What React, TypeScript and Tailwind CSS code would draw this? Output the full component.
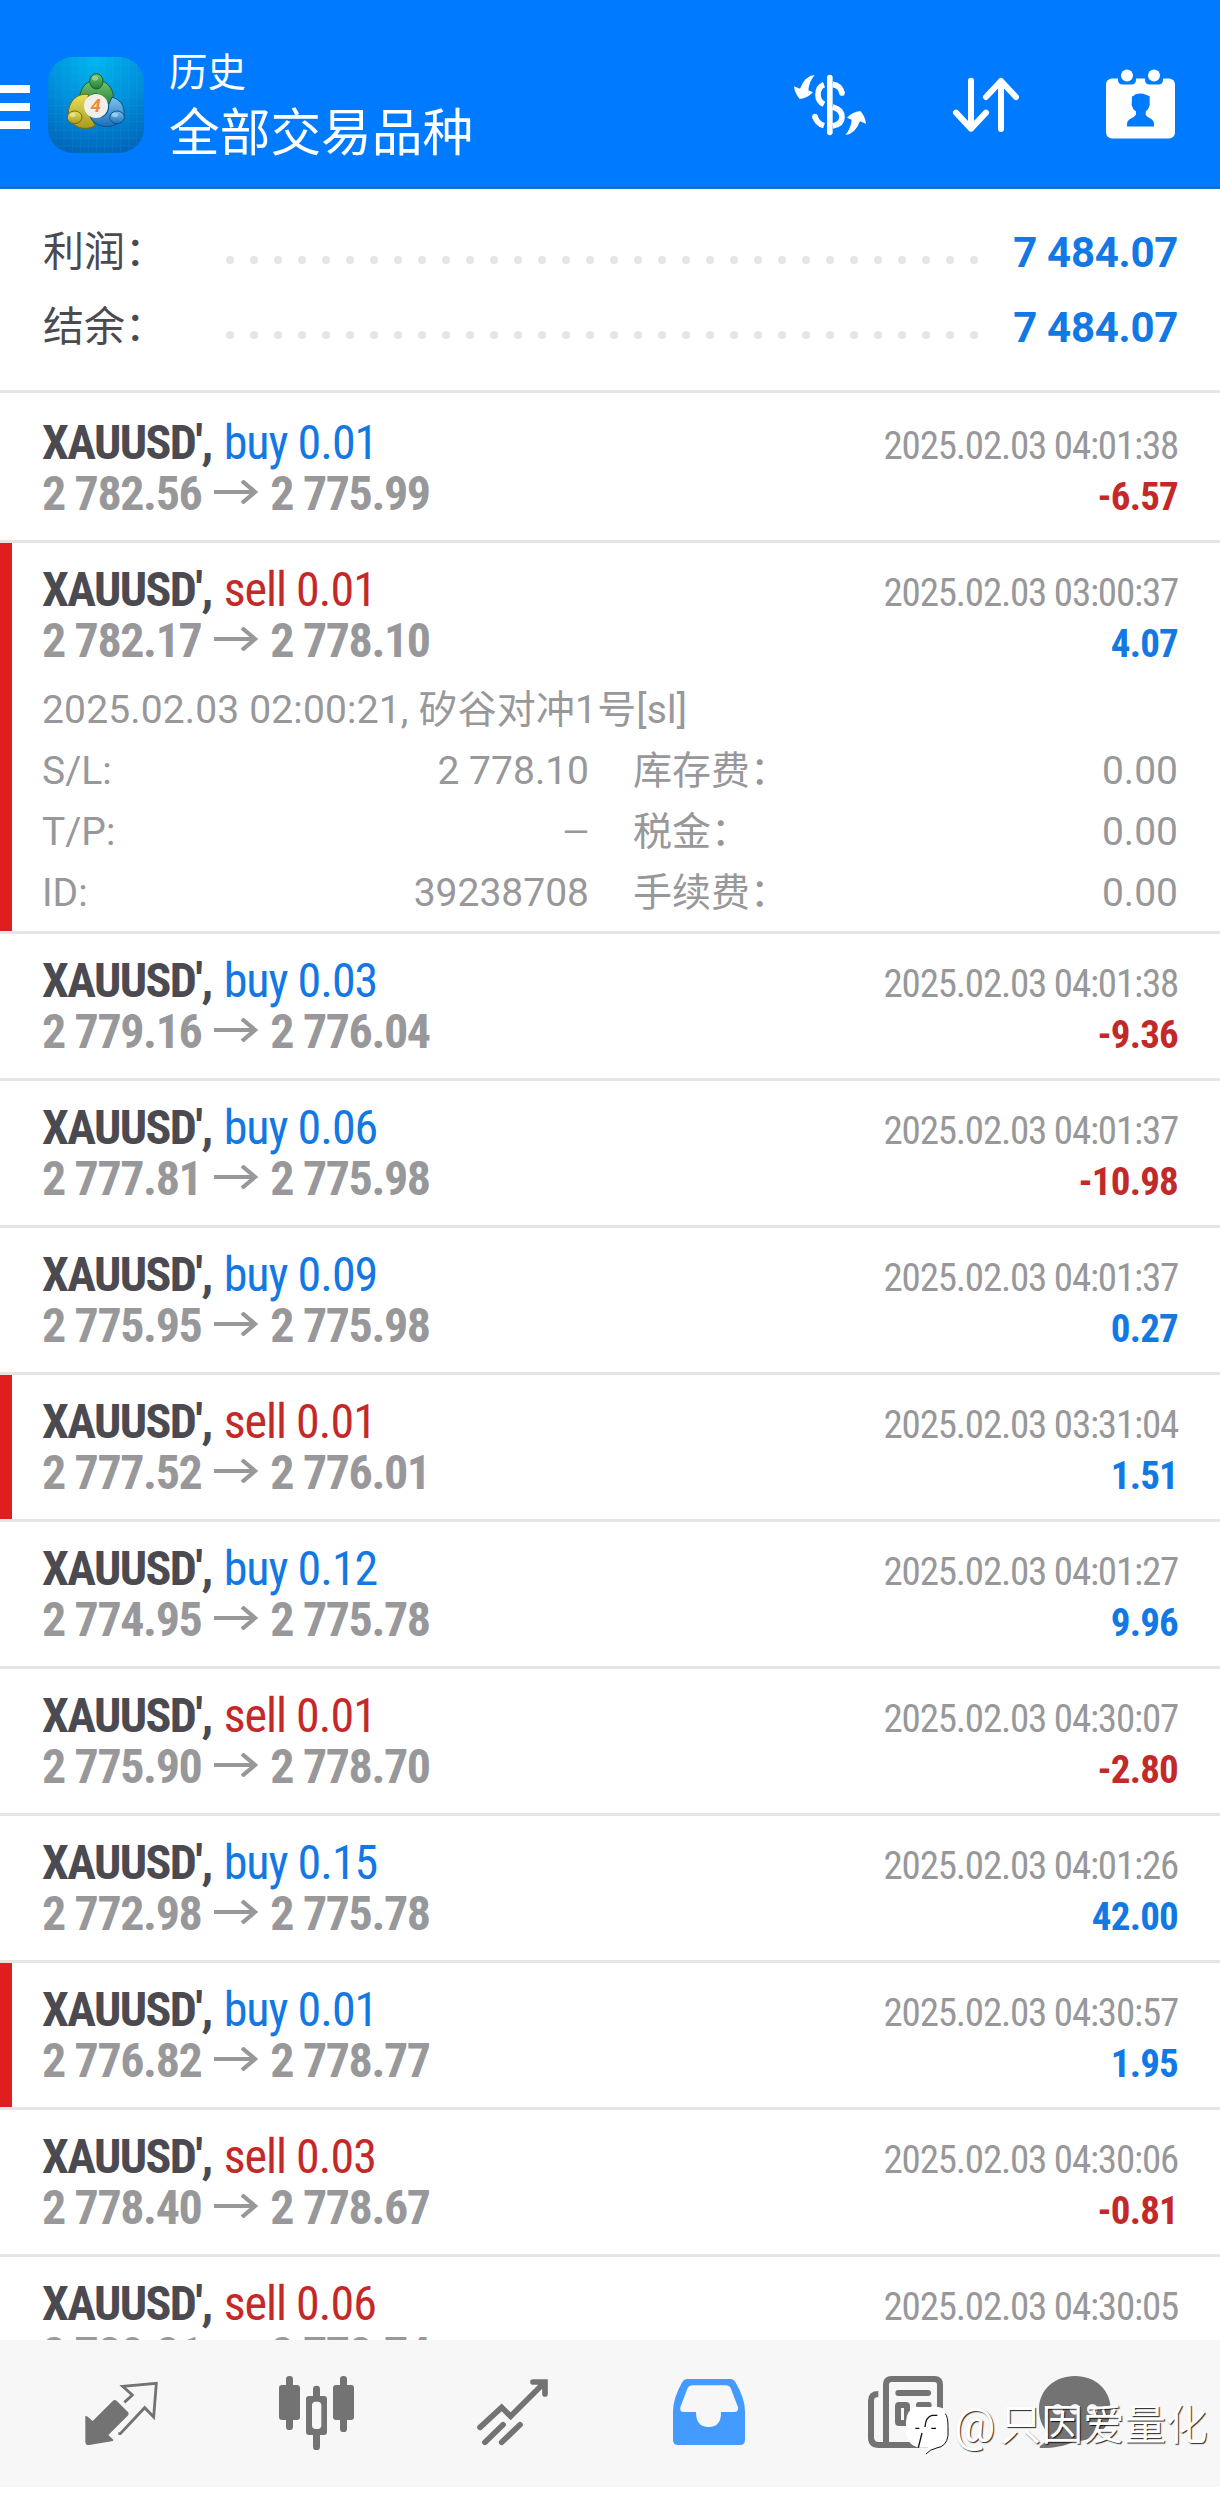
type Deal = {
  side: "buy" | "sell";
  volume: string;
  open: string;
  close: string;
  time: string;
  profit: string;
  marked?: boolean;
  expanded?: boolean;
};

const deals: Deal[] = [
  { side: "buy", volume: "0.01", open: "2 782.56", close: "2 775.99", time: "2025.02.03 04:01:38", profit: "-6.57" },
  { side: "sell", volume: "0.01", open: "2 782.17", close: "2 778.10", time: "2025.02.03 03:00:37", profit: "4.07", marked: true, expanded: true },
  { side: "buy", volume: "0.03", open: "2 779.16", close: "2 776.04", time: "2025.02.03 04:01:38", profit: "-9.36" },
  { side: "buy", volume: "0.06", open: "2 777.81", close: "2 775.98", time: "2025.02.03 04:01:37", profit: "-10.98" },
  { side: "buy", volume: "0.09", open: "2 775.95", close: "2 775.98", time: "2025.02.03 04:01:37", profit: "0.27" },
  { side: "sell", volume: "0.01", open: "2 777.52", close: "2 776.01", time: "2025.02.03 03:31:04", profit: "1.51", marked: true },
  { side: "buy", volume: "0.12", open: "2 774.95", close: "2 775.78", time: "2025.02.03 04:01:27", profit: "9.96" },
  { side: "sell", volume: "0.01", open: "2 775.90", close: "2 778.70", time: "2025.02.03 04:30:07", profit: "-2.80" },
  { side: "buy", volume: "0.15", open: "2 772.98", close: "2 775.78", time: "2025.02.03 04:01:26", profit: "42.00" },
  { side: "buy", volume: "0.01", open: "2 776.82", close: "2 778.77", time: "2025.02.03 04:30:57", profit: "1.95", marked: true },
  { side: "sell", volume: "0.03", open: "2 778.40", close: "2 778.67", time: "2025.02.03 04:30:06", profit: "-0.81" },
  { side: "sell", volume: "0.06", open: "2 780.21", close: "2 778.74", time: "2025.02.03 04:30:05", profit: "" },
];

const details = [
  ["S/L:", "2 778.10", "库存费：", "0.00"],
  ["T/P:", "—", "税金：", "0.00"],
  ["ID:", "39238708", "手续费：", "0.00"],
];

function AppLogo() {
  return (
    <svg className="ml-[18px] size-24 shrink-0 rounded-[25px]" viewBox="24 21 288 288">
      <defs>
        <radialGradient id="sky" cx="50%" cy="0%" r="105%">
          <stop offset="0" stopColor="#00b8ee" />
          <stop offset=".5" stopColor="#008fdc" />
          <stop offset="1" stopColor="#0063b8" />
        </radialGradient>
        <linearGradient id="green" x1="0" y1="0" x2="0" y2="1">
          <stop offset="0" stopColor="#7cc46e" />
          <stop offset="1" stopColor="#1f7f36" />
        </linearGradient>
        <linearGradient id="yellow" x1="0" y1="0" x2="0" y2="1">
          <stop offset="0" stopColor="#e9e05c" />
          <stop offset="1" stopColor="#a89a1d" />
        </linearGradient>
        <linearGradient id="blue" x1="0" y1="0" x2="0" y2="1">
          <stop offset="0" stopColor="#7cc3ee" />
          <stop offset="1" stopColor="#1b6fb8" />
        </linearGradient>
      </defs>
      <rect x="24" y="21" width="288" height="288" fill="url(#sky)" />
      <path
        d="M48 21V309M72 21V309M97 21V309M121 21V309M145 21V309M170 21V309M194 21V309M218 21V309M242 21V309M266 21V309M290 21V309M24 45H312M24 70H312M24 94H312M24 118H312M24 142H312M24 167H312M24 191H312M24 215H312M24 240H312M24 264H312M24 288H312"
        stroke="#5cc3f5"
        strokeOpacity=".14"
        strokeWidth="2"
      />
      <g strokeWidth="3">
        <path d="M121 162C112 118 140 90 170 90S232 120 216 170L190 150Q170 118 148 140Z" fill="url(#green)" stroke="#17602c" />
        <path d="M146 134C108 126 80 162 86 200C96 232 136 246 166 226L146 192Q150 186 134 172Z" fill="url(#yellow)" stroke="#766a10" />
        <path d="M216 142C252 150 262 190 242 214C210 242 162 230 150 198L188 200Q208 190 206 164Z" fill="url(#blue)" stroke="#0e4e8b" />
        <ellipse cx="169" cy="94" rx="20" ry="23" fill="url(#green)" stroke="#17602c" />
        <ellipse cx="104" cy="202" rx="22" ry="19" fill="url(#yellow)" stroke="#766a10" />
        <ellipse cx="231" cy="202" rx="22" ry="19" fill="url(#blue)" stroke="#0e4e8b" />
      </g>
      <ellipse cx="165" cy="85" rx="9" ry="7" fill="#fff" opacity=".35" />
      <ellipse cx="98" cy="195" rx="9" ry="6" fill="#fff" opacity=".4" />
      <ellipse cx="225" cy="195" rx="9" ry="6" fill="#fff" opacity=".4" />
      <circle cx="168" cy="168" r="36" fill="#f1efec" />
      <text x="167" y="187" textAnchor="middle" className="fill-[#ef8a35] font-[Roboto] text-[56px] font-bold italic">
        4
      </text>
    </svg>
  );
}

function CurrencyIcon() {
  return (
    <svg className="h-[66px] w-[76px]" viewBox="96 96 228 198" fill="none" stroke="#fff" strokeWidth="17">
      <path d="M209.500 113V277" strokeLinecap="round" />
      <path d="M192 134Q174 141 174 164Q174 184 192 193M218 133Q242 137 246 159M218 201Q246 208 246 232Q246 253 218 258M165 229Q170 250 192 257" />
      <circle cx="246" cy="159" r="8.500" fill="#fff" stroke="none" />
      <circle cx="165" cy="230" r="8.500" fill="#fff" stroke="none" />
      <g fill="#fff" stroke="none">
        <path id="curl" d="M164 105Q136 106 120 146L102 139Q104 160 119 177Q142 175 159 157L145 151Q147 125 164 105Z" />
        <use href="#curl" transform="rotate(180 210 195)" />
      </g>
    </svg>
  );
}

function SortIcon() {
  return (
    <svg className="h-[60px] w-[70px]" viewBox="573 105 210 180" fill="none" stroke="#fff" strokeWidth="18" strokeLinecap="round" strokeLinejoin="round">
      <path d="M633 122V266M588 218L633 266L678 218M723 267V123M678 171L723 123L768 171" />
    </svg>
  );
}

function CalendarIcon() {
  return (
    <svg className="size-[73px]" viewBox="1032 85.5 219 219" fill="#fff">
      <rect x="1038" y="114" width="207" height="180" rx="18" />
      <path d="M1074 105H1128V118Q1128 132 1114 132H1088Q1074 132 1074 118ZM1155 105H1209V118Q1209 132 1195 132H1169Q1155 132 1155 118Z" fill="#007aff" />
      <circle cx="1101" cy="105" r="18" />
      <circle cx="1182" cy="105" r="18" />
      <path
        d="M1116 168Q1122 166 1125 162Q1142 155 1158 163L1169 167V194Q1167 204 1157 213V223Q1162 232 1175 236Q1182 241 1182 249V258H1101V249Q1101 241 1109 236Q1122 232 1128 222V213Q1117 204 1115 194Z"
        fill="#007aff"
      />
    </svg>
  );
}

function PriceArrow() {
  return (
    <svg className="mr-3 ml-[13px] h-6 w-11" viewBox="0 0 44 24" fill="none" stroke="#98989b" strokeWidth="4.2">
      <path d="M0 12H41M28 1L41 12L28 23" />
    </svg>
  );
}

function SummaryRow({ label, value }: { label: string; value: string }) {
  return (
    <div className="flex h-[75px] items-center leading-[75px]">
      <span className="w-[183px] text-[41px] text-[#4b4a50]">{label}</span>
      <span className="mt-[15px] flex w-[752px] justify-between">
        {Array.from({ length: 32 }, (_, i) => (
          <i key={i} className="size-2 rounded-full bg-[#e5e5e5]" />
        ))}
      </span>
      <span className="ml-auto text-[42px] font-bold tracking-[-0.3px] text-[#1278e4]">{value}</span>
    </div>
  );
}

function DealRow({ deal }: { deal: Deal }) {
  return (
    <div className={`border-b-3 border-[#e5e5e5] ${deal.marked ? "bg-linear-to-r from-[#e01e1e] from-[12px] to-white to-[12px]" : ""}`}>
      <div className={`pr-[42px] pl-[42px] pt-[21px] ${deal.expanded ? "pb-[7px]" : "pb-[21px]"}`}>
        <div className="flex h-[51px] items-baseline justify-between font-['Roboto_Condensed',Roboto,sans-serif] leading-[51px]">
          <span className="text-[48px]">
            <b className="tracking-[-1.6px] text-[#4b4a50]">XAUUSD',</b>
            <span className={`ml-3 tracking-[-1px] ${deal.side === "buy" ? "text-[#1278e4]" : "text-[#c4292a]"}`}>
              {deal.side} {deal.volume}
            </span>
          </span>
          <span className="text-[39px] tracking-[-1.2px] text-[#98989b]">{deal.time}</span>
        </div>
        <div className="flex h-[51px] items-baseline justify-between font-['Roboto_Condensed',Roboto,sans-serif] font-bold leading-[51px]">
          <span className="flex items-baseline text-[48px] tracking-[-1.4px] text-[#98989b]">
            {deal.open}
            <span className="self-start pt-[12px]">
              <PriceArrow />
            </span>
            {deal.close}
          </span>
          <span className={`text-[39px] tracking-[-0.8px] ${deal.profit.startsWith("-") ? "text-[#c4292a]" : "text-[#1278e4]"}`}>{deal.profit}</span>
        </div>
        {deal.expanded && (
          <div className="mt-[14px] text-[39px] leading-[61px] text-[#98989b]">
            <p className="tracking-[0.15px]">2025.02.03 02:00:21, 矽谷对冲1号[sl]</p>
            {details.map(([name, value, fee, amount]) => (
              <div key={name} className="flex h-[61px]">
                <span>{name}</span>
                <span className={`ml-auto ${value === "—" ? "text-[34px]" : ""}`}>{value}</span>
                <span className="ml-[44px] flex w-[545px] justify-between">
                  <span>{fee}</span>
                  <span>{amount}</span>
                </span>
              </div>
            ))}
          </div>
        )}
      </div>
    </div>
  );
}

function TabBar() {
  return (
    <nav className="relative mb-2 flex h-[147px] shrink-0 items-start gap-[116px] bg-[#f7f7f7] pt-[34px] pl-[82px]">
      {/* Quotes */}
      <svg className="size-20 shrink-0" viewBox="66 132 240 240" fill="#737373">
        <path d="M76 258L81 259L98 273L159 212Q164 208 170 212L203 245Q209 251 203 257L145 315L160 329L159 333L88 345Q76 346 76 335Z" />
        <path d="M193 217L217 195L188 169L289 160L281 261L254 233L181 311H175" fill="none" stroke="#737373" strokeWidth="8.500" />
      </svg>
      {/* Charts */}
      <svg className="size-20 shrink-0" viewBox="654 132 240 240" fill="#737373">
        <rect x="678" y="138" width="21" height="162" rx="10" />
        <rect x="657" y="165" width="63" height="105" rx="9" />
        <rect x="840" y="138" width="21" height="168" rx="10" />
        <rect x="819" y="165" width="63" height="105" rx="9" />
        <rect x="759" y="167" width="21" height="193" rx="10" />
        <rect x="738" y="198" width="63" height="117" rx="9" />
        <rect x="756" y="215" width="28" height="82" rx="11" fill="#f7f7f7" />
      </svg>
      {/* Trade */}
      <svg className="size-20 shrink-0" viewBox="1242 132 240 240" fill="none" stroke="#737373" strokeWidth="17" strokeLinecap="round">
        <path d="M1260 292L1325 232L1352 259L1452 159M1419 156H1455V192" />
        <path d="M1275 337L1329 284M1325 337L1380 284" />
      </svg>
      {/* History */}
      <svg className="size-20 shrink-0" viewBox="60 132 240 240" fill="#439bff" fillRule="evenodd">
        <path d="M111 147H241Q251 147 256 156Q285 205 285 245V330Q285 345 270 345H84Q69 345 69 330V245Q69 205 97 156Q102 147 111 147ZM126 166Q117 166 113 174L91 232Q88 246 101 246H138Q138 291 176 291T213 246H253Q266 246 264 232L242 174Q238 166 229 166Z" />
      </svg>
      {/* News */}
      <svg className="size-20 shrink-0" viewBox="648 132 240 240" fill="none" stroke="#737373" strokeWidth="18">
        <path d="M685 192Q663 192 663 212V322Q663 345 686 345H860Q870 345 870 334V164Q870 147 853 147H725Q708 147 708 164V345" />
        <path d="M745 189H834M807 225H836M807 279H836" strokeLinecap="round" />
        <rect x="744" y="225" width="27" height="54" rx="3" />
      </svg>
      {/* Messages */}
      <svg className="-ml-[26px] size-20 shrink-0" viewBox="528 132 240 240" fill="#737373">
        <path d="M645 138C707 138 752 180 752 238C752 300 700 334 645 334C610 352 570 355 540 354Q536 350 545 345Q560 336 565 310C548 292 537 270 537 238C537 180 583 138 645 138Z" />
        <g fill="#f7f7f7">
          <circle cx="593" cy="238" r="16" />
          <circle cx="645" cy="238" r="16" />
          <circle cx="697" cy="238" r="16" />
        </g>
      </svg>

      {/* Author mark over the last tabs */}
      <div className="absolute top-[56px] left-[904px] flex items-start whitespace-nowrap">
        <svg className="mt-[9px] h-[52px] w-[50px] shrink-0" viewBox="132 226 150 156">
          <path d="M170 232H236Q264 236 264 270V320Q262 352 230 354L222 356Q206 362 198 373L204 354H180Q142 348 138 310V276Q140 238 170 232Z" fill="#fff" />
          <path d="M256 252Q264 262 264 290V318Q260 350 230 355Q208 360 198 373" fill="none" stroke="#111" strokeWidth="3" />
          <path d="M232 257H216Q197 262 195 292M166 296H178M214 296H228M186 310L175 354" fill="none" stroke="#111" strokeWidth="4" />
        </svg>
        <span className="flex leading-[60px] text-white [text-shadow:1px_1px_1px_rgb(0_0_0/0.85)]">
          <span className="w-[46px] text-[46px]">@</span>
          <span className="text-[41.5px]">只因爱量化</span>
        </span>
      </div>
    </nav>
  );
}

export default function App() {
  return (
    <div className="flex h-[2495px] w-[1220px] flex-col overflow-hidden bg-white font-[Roboto,'Noto_Sans_CJK_SC',sans-serif]">
      <header className="flex h-[189px] shrink-0 items-center border-b-3 border-[#0f70dc] bg-[#007aff] pt-[24px] pr-[43px]">
        <div className="mt-1 flex w-[30px] flex-col gap-[10px]">
          <i className="h-2 bg-white" />
          <i className="h-2 bg-white" />
          <i className="h-2 bg-white" />
        </div>
        <AppLogo />
        <div className="-mt-3 ml-[25px] font-['Noto_Sans_CJK_SC',sans-serif] leading-[60px] text-white">
          <p className="text-[38.5px]">历史</p>
          <h1 className="text-[50.7px]">全部交易品种</h1>
        </div>
        <div className="ml-auto flex items-center gap-[83px]">
          <CurrencyIcon />
          <SortIcon />
          <CalendarIcon />
        </div>
      </header>

      <section className="shrink-0 border-b-3 border-[#e5e5e5] pt-[26px] pr-[42px] pb-[25px] pl-[43px]">
        <SummaryRow label="利润：" value="7 484.07" />
        <SummaryRow label="结余：" value="7 484.07" />
      </section>

      <main className="min-h-0 flex-1 overflow-hidden pt-[3px]">
        {deals.map((deal) => (
          <DealRow key={deal.time + deal.side + deal.volume} deal={deal} />
        ))}
      </main>

      <TabBar />
    </div>
  );
}
